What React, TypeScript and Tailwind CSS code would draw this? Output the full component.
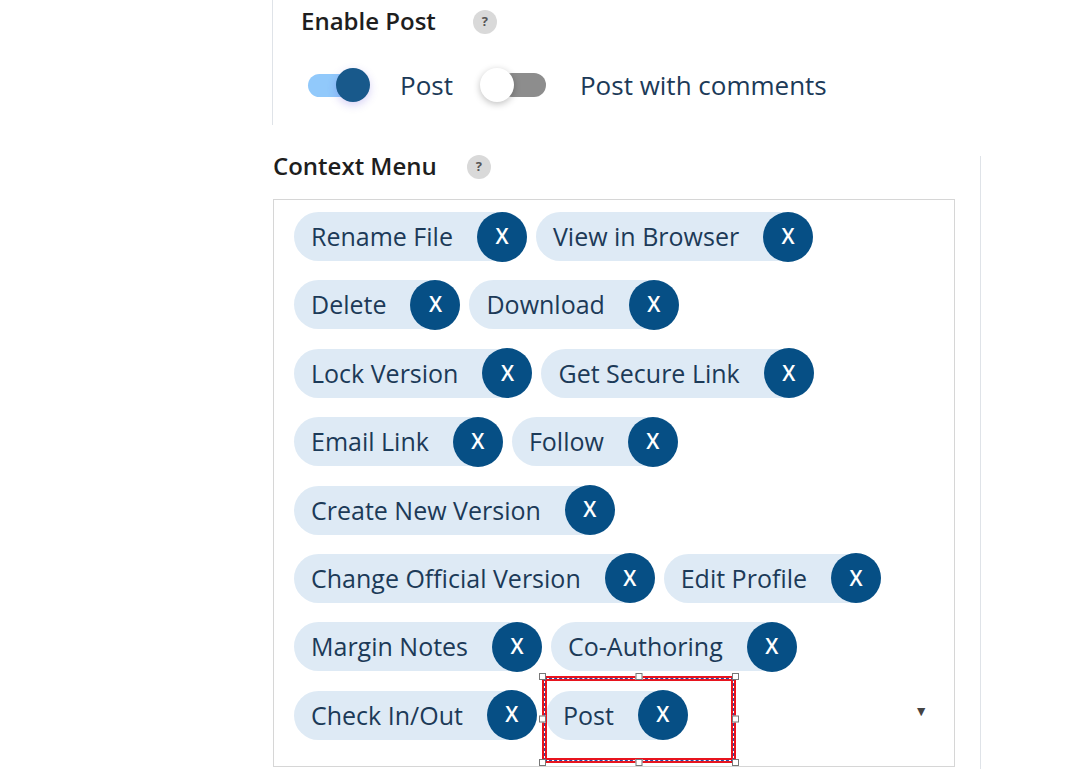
const items = [
  ['Rename File', 'View in Browser'],
  ['Delete', 'Download'],
  ['Lock Version', 'Get Secure Link'],
  ['Email Link', 'Follow'],
  ['Create New Version'],
  ['Change Official Version', 'Edit Profile'],
  ['Margin Notes', 'Co-Authoring'],
  ['Check In/Out', 'Post'],
];

function Help() {
  return (
    <span className="inline-flex h-[24px] w-[24px] items-center justify-center rounded-full bg-[#d9d9d9] text-[13px] font-bold text-[#555]">
      ?
    </span>
  );
}

function Chip({ label, selected }: { label: string; selected?: boolean }) {
  return (
    <div className="relative">
      <div className="flex h-[49px] items-center rounded-full bg-[#deeaf5] pl-[17px]">
        <span className="text-[25px] leading-none text-[#1c3a58]">{label}</span>
        <span className="ml-[24px] flex h-[50px] w-[50px] items-center justify-center rounded-full bg-[#064f85] text-[21px] font-semibold text-white">
          X
        </span>
      </div>
      {selected && <Selection />}
    </div>
  );
}

function Handle({ className }: { className: string }) {
  return <span className={`absolute h-[7px] w-[7px] border border-[#777] bg-white ${className}`} />;
}

// selection frame drawn over the last chip (design-tool overlay)
function Selection() {
  return (
    <div className="pointer-events-none absolute -left-[4px] -top-[15px] h-[87px] w-[194px] border-2 border-[#e8141e]">
      <div className="h-full w-full border border-dashed border-[#2a4fa8]">
        <div className="h-full w-full border-2 border-[#e8141e]" />
      </div>
      <Handle className="-left-[5px] -top-[5px]" />
      <Handle className="left-1/2 -top-[5px] -translate-x-1/2" />
      <Handle className="-right-[5px] -top-[5px]" />
      <Handle className="-left-[5px] top-1/2 -translate-y-1/2" />
      <Handle className="-right-[5px] top-1/2 -translate-y-1/2" />
      <Handle className="-left-[5px] -bottom-[5px]" />
      <Handle className="left-1/2 -bottom-[5px] -translate-x-1/2" />
      <Handle className="-right-[5px] -bottom-[5px]" />
    </div>
  );
}

export default function App() {
  return (
    <div
      className="h-[769px] w-[1077px] overflow-hidden bg-white text-[#222]"
      style={{ fontFamily: '"Open Sans", "Noto Sans", sans-serif' }}
    >
      <div className="ml-[272px]">
        {/* Enable Post */}
        <div className="h-[125px] border-l border-[#dfe3e8] pl-[28px] pt-[8px]">
          <div className="flex items-center">
            <span className="text-[24px] font-semibold leading-[24px] text-[#1e1e1e]">Enable Post</span>
            <span className="ml-[37px]">
              <Help />
            </span>
          </div>
          <div className="mt-[34px] flex items-center">
            {/* on */}
            <div className="ml-[7px] flex h-[23px] w-[52px] items-center justify-end rounded-full bg-[#91c9fb]">
              <span className="-mr-[10px] h-[34px] w-[34px] shrink-0 rounded-full bg-[#18598b] shadow-[0_3px_8px_rgba(90,70,220,0.25)]" />
            </div>
            <span className="ml-[40px] text-[26px] leading-[35px] text-[#1c3a58]">Post</span>
            {/* off */}
            <div className="ml-[47px] flex h-[24px] w-[46px] items-center rounded-full bg-[#8d8d8d]">
              <span className="-ml-[20px] h-[34px] w-[34px] shrink-0 rounded-full bg-white shadow-[0_2px_7px_rgba(0,0,0,0.25)]" />
            </div>
            <span className="ml-[34px] text-[26px] leading-[35px] text-[#1c3a58]">Post with comments</span>
          </div>
        </div>

        {/* Context Menu */}
        <div className="mt-[31px] h-[613px] w-[709px] border-r border-[#dfe3e8]">
          <div className="flex h-[20px] items-center pl-[1px]">
            <span className="text-[24px] font-semibold leading-[20px] text-[#1e1e1e]">Context Menu</span>
            <span className="ml-[30px]">
              <Help />
            </span>
          </div>
          <div className="relative mt-[23px] ml-[1px] h-[568px] w-[682px] border border-[#d6d6d6] px-[20px] pt-[12px]">
            <div className="flex flex-col gap-y-[19.4px]">
              {items.map((row, i) => (
                <div key={i} className="flex gap-x-[9px]">
                  {row.map((label) => (
                    <Chip key={label} label={label} selected={label === 'Post'} />
                  ))}
                </div>
              ))}
            </div>
            <span className="absolute right-[26px] top-[500px] text-[14px] text-[#444]">▼</span>
          </div>
        </div>
      </div>
    </div>
  );
}
